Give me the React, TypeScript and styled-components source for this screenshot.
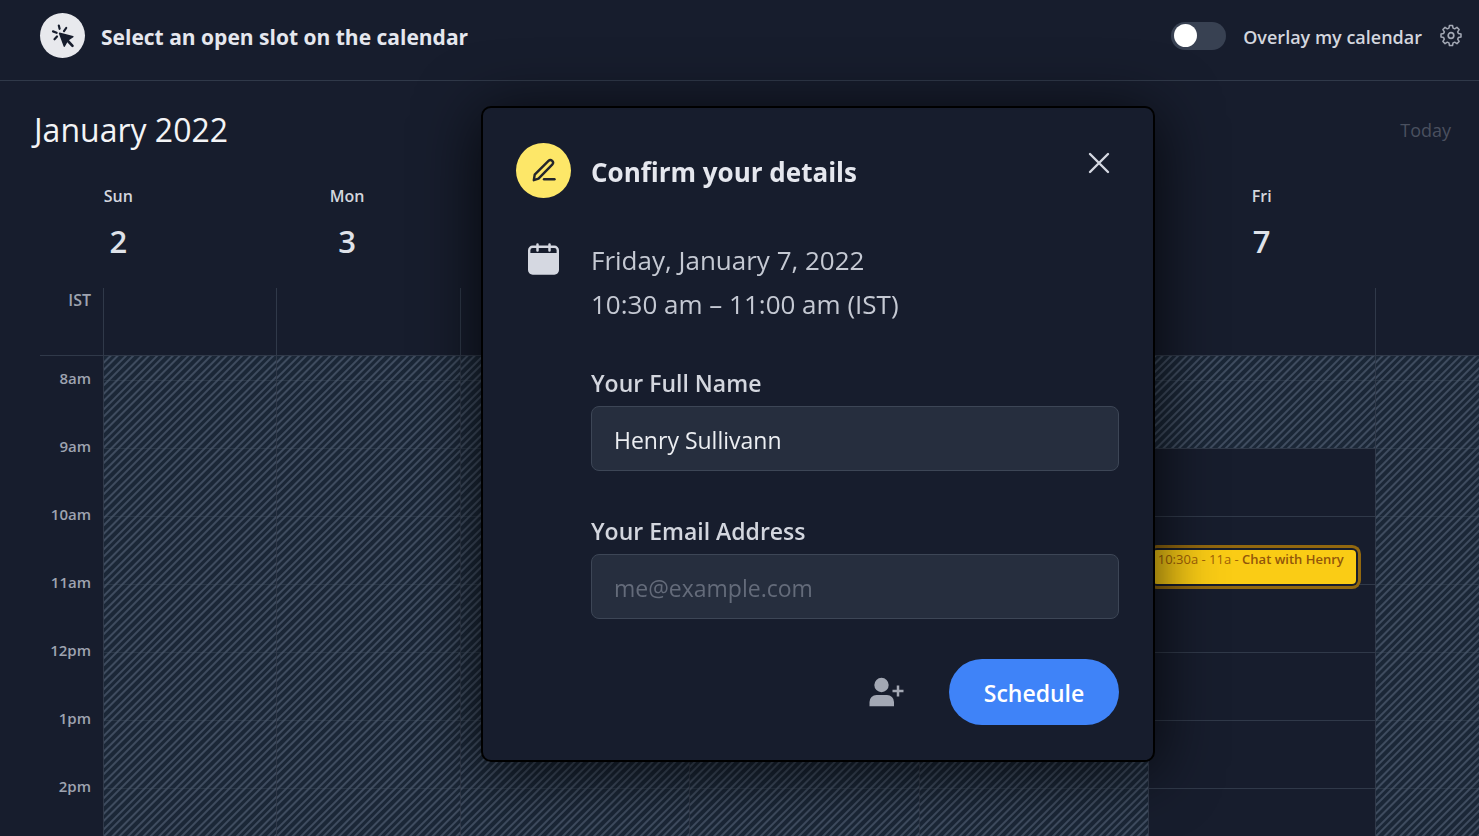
import React, { useState } from "react";
import styled, { createGlobalStyle, css } from "styled-components";

const colors = {
  page: "#171d2d",
  line: "#303949",
  hatch: "#1b2737",
  stripe: "#3f4c5f",
  heading: "#e5e7ee",
  text: "#c5c9d3",
  muted: "#9ea3b0",
  faint: "#4a505f",
  field: "#262e3e",
  fieldBorder: "#3d4656",
};

const GlobalStyle = createGlobalStyle`
  * { box-sizing: border-box; }
  body {
    margin: 0;
    background: ${colors.page};
    color: ${colors.heading};
    font-family: "Open Sans", "Noto Sans", sans-serif;
  }
  button, input { font-family: inherit; }
  h1, h2, p { margin: 0; }
`;

const Page = styled.div`
  display: flex;
  flex-direction: column;
  height: 100vh;
  overflow: hidden;
`;

const TopBar = styled.header`
  display: flex;
  align-items: center;
  flex: none;
  height: 81px;
  padding: 0 16px 9px 40px;
  border-bottom: 1px solid ${colors.line};
`;

const Badge = styled.span<{ $size: number; $color: string }>`
  display: flex;
  align-items: center;
  justify-content: center;
  flex: none;
  width: ${(p) => p.$size}px;
  height: ${(p) => p.$size}px;
  border-radius: 50%;
  background: ${(p) => p.$color};
`;

const TopTitle = styled.h1`
  flex: 1;
  margin-left: 16px;
  padding-top: 2px;
  font-size: 21px;
  line-height: 28px;
  font-weight: 700;
`;

const ToggleLabel = styled.label`
  display: flex;
  align-items: center;
  gap: 17px;
  color: #d3d6de;
  font-size: 18px;
  line-height: 28px;
  font-weight: 600;
  span { padding-top: 2px; }
`;

const Toggle = styled.input`
  appearance: none;
  display: flex;
  align-items: center;
  width: 55px;
  height: 28px;
  margin: 0;
  padding: 0 3px;
  border-radius: 14px;
  background: #384152;
  &::before {
    content: "";
    width: 23px;
    height: 23px;
    border-radius: 50%;
    background: #fff;
  }
  &:checked {
    justify-content: flex-end;
    background: #3f83f8;
  }
`;

const IconButton = styled.button`
  display: flex;
  align-items: center;
  justify-content: center;
  padding: 0;
  border: 0;
  background: none;
  cursor: pointer;
`;

const GearButton = styled(IconButton)`
  width: 24px;
  height: 24px;
  margin-left: 17px;
`;

const MonthBar = styled.div`
  display: flex;
  align-items: center;
  justify-content: space-between;
  flex: none;
  height: 97px;
  padding: 0 28px 0 34px;
`;

const Month = styled.h2`
  font-size: 32px;
  line-height: 40px;
  font-weight: 400;
  color: #f3f4f6;
`;

const Today = styled.button`
  padding: 0;
  border: 0;
  background: none;
  color: ${colors.faint};
  font-size: 18px;
  line-height: 28px;
`;

const DayHeads = styled.div`
  display: grid;
  grid-template-columns: repeat(6, 1fr);
  flex: none;
  height: 110px;
  padding: 6px 103px 0 4px;
`;

const DayHead = styled.div<{ $column: number }>`
  grid-column: ${(p) => p.$column};
  display: flex;
  flex-direction: column;
  align-items: center;
`;

const DayName = styled.span`
  font-size: 16px;
  line-height: 24px;
  font-weight: 600;
  color: #d3d6de;
`;

const DayNumber = styled.span`
  margin-top: 13px;
  font-size: 31px;
  line-height: 40px;
  font-weight: 600;
  color: #dfe2e9;
`;

const Calendar = styled.div`
  display: grid;
  grid-template-columns: 103px 173fr 184fr 229fr 229fr 229fr 227fr 104fr;
  grid-template-rows: 68px auto;
  flex: none;
`;

const Zone = styled.div`
  margin-left: 40px;
  padding-right: 12px;
  border-bottom: 1px solid ${colors.line};
  text-align: right;
  font-size: 16px;
  line-height: 24px;
  font-weight: 600;
  color: ${colors.muted};
`;

const AllDay = styled.div`
  border-left: 1px solid ${colors.line};
  border-bottom: 1px solid ${colors.line};
`;

const Axis = styled.div`
  padding: 13px 12px 0 0;
`;

const Hour = styled.div`
  height: 68px;
  text-align: right;
  font-size: 15px;
  line-height: 18px;
  font-weight: 600;
  color: ${colors.muted};
`;

const DayColumn = styled.div`
  border-left: 1px solid ${colors.line};
  background: repeating-linear-gradient(
    135deg,
    ${colors.hatch} 0 3px,
    ${colors.stripe} 4px 5px,
    ${colors.hatch} 6px 8px,
    ${colors.stripe} 9px 10px,
    ${colors.hatch} 11px
  );
`;

const Slot = styled.div<{ $open: boolean; $first: boolean }>`
  position: relative;
  height: ${(p) => (p.$first ? 24 : 68)}px;
  ${(p) =>
    !p.$first &&
    css`
      border-top: 1px solid ${p.$open ? colors.line : "rgba(75, 88, 107, 0.3)"};
    `}
  ${(p) =>
    p.$open &&
    css`
      background: ${colors.page};
    `}
`;

const Booking = styled.div`
  position: absolute;
  z-index: 1;
  top: 33px;
  left: 4px;
  right: 19px;
  height: 34px;
  padding-left: 5px;
  border-radius: 4px;
  background: #facc15;
  box-shadow: 0 0 0 2px ${colors.page}, 0 0 0 5px #92680f;
  color: #a16207;
  font-size: 13px;
  line-height: 18px;
  white-space: nowrap;
  b {
    font-weight: 600;
    color: #92560a;
  }
`;

const Overlay = styled.div`
  position: fixed;
  inset: 0;
  z-index: 2;
  display: flex;
  align-items: flex-start;
  justify-content: center;
  padding: 106px 0 0 157px;
`;

const Dialog = styled.form`
  width: 674px;
  padding: 34px 34px 35px 33px;
  border: 2px solid #000;
  border-radius: 10px;
  background: ${colors.page};
  box-shadow: 0 8px 64px rgba(0, 0, 0, 0.75);
`;

const DialogHead = styled.div`
  display: flex;
  align-items: center;
  gap: 20px;
  height: 56px;
`;

const DialogTitle = styled.h2`
  flex: 1;
  padding-top: 3px;
  font-size: 26px;
  line-height: 36px;
  font-weight: 700;
`;

const CloseButton = styled(IconButton)`
  align-self: flex-start;
  width: 40px;
  height: 42px;
`;

const When = styled.div`
  display: flex;
  gap: 32px;
  margin-top: 40px;
  padding-left: 12px;
  color: ${colors.text};
  font-size: 26px;
  line-height: 44px;
  svg { flex: none; margin-top: 5px; }
`;

const Fields = styled.div`
  display: flex;
  flex-direction: column;
  gap: 43px;
  margin: 40px 0 0 75px;
`;

const Field = styled.div`
  display: flex;
  flex-direction: column;
`;

const FieldLabel = styled.label`
  font-size: 23px;
  line-height: 34px;
  font-weight: 600;
  color: #d3d6de;
`;

const TextInput = styled.input`
  height: 65px;
  margin-top: 6px;
  padding: 2px 22px 0;
  border: 1px solid ${colors.fieldBorder};
  border-radius: 8px;
  outline: none;
  background: ${colors.field};
  color: #eceef2;
  font-size: 23px;
  &::placeholder { color: #646b7a; opacity: 1; }
`;

const Actions = styled.div`
  display: flex;
  align-items: center;
  justify-content: flex-end;
  gap: 44px;
  margin-top: 40px;
`;

const Submit = styled.button`
  width: 170px;
  height: 66px;
  padding: 2px 0 0;
  border: 0;
  border-radius: 33px;
  background: #3f83f8;
  color: #fff;
  font-size: 23px;
  font-weight: 600;
`;

const ClickIcon = () => (
  <svg width="24" height="24" viewBox="0 0 24 24" fill="none" stroke={colors.page} strokeWidth="2.2" strokeLinecap="round" aria-hidden="true">
    <path d="M7.800 1.500l.8 3.300M15.200 4l-2.200 3.200M2 7.400l3.600 1.400M3.500 15.300l2.500-2.800" />
    <path d="M8.500 9.300l13.400 3.400-5.200 3.500-3.400 6z" fill={colors.page} strokeWidth="1.400" strokeLinejoin="round" />
    <path d="M16.500 16.500l5 5.300" strokeWidth="2.600" />
  </svg>
);

const GearIcon = () => (
  <svg width="24" height="24" viewBox="0 0 24 24" fill="none" stroke="#a3a8b4" strokeWidth="1.700" strokeLinejoin="round" aria-hidden="true">
    <path d="M10.300 1.800h3.400l.6 2.900 1.800.8 2.500-1.600 2.400 2.400-1.600 2.500.8 1.800 2.900.6v3.400l-2.900.6-.8 1.800 1.600 2.500-2.400 2.400-2.500-1.600-1.800.8-.6 2.900h-3.400l-.6-2.900-1.800-.8-2.500 1.600L3 19.500l1.600-2.500-.8-1.800-2.900-.6v-3.400l2.900-.6.8-1.800L3 6.300l2.400-2.400 2.500 1.600 1.800-.8z" transform="translate(1.200 -.1) scale(.9)" />
    <circle cx="12" cy="11.500" r="2.800" />
  </svg>
);

const PencilIcon = () => (
  <svg width="24" height="24" viewBox="0 0 24 24" fill="none" stroke="#23262c" strokeWidth="2.400" strokeLinecap="round" strokeLinejoin="round" aria-hidden="true">
    <path d="M1.800 22.200l.9-5.500L16.500 2.900a2.600 2.600 0 0 1 3.700 3.700L6.500 20.700z" />
    <path d="M12 21.300h10.500" />
  </svg>
);

const CalendarIcon = () => (
  <svg width="31" height="32" viewBox="0 0 31 32" aria-hidden="true">
    <rect x="1.200" y="3.700" width="28.600" height="26.800" rx="3.500" fill="none" stroke="#d5d8e1" strokeWidth="2.400" />
    <path d="M1 10h29V28a3 3 0 0 1-3 3H4a3 3 0 0 1-3-3z" fill="#d5d8e1" />
    <path d="M9.500 1.500v6M21.500 1.500v6" stroke="#d5d8e1" strokeWidth="2.500" strokeLinecap="round" />
  </svg>
);

const CloseIcon = () => (
  <svg width="22" height="22" viewBox="0 0 22 22" fill="none" stroke="#d5d8e1" strokeWidth="2.400" strokeLinecap="round" aria-hidden="true">
    <path d="M2 2l18 18M20 2L2 20" />
  </svg>
);

const AddGuestIcon = () => (
  <svg width="36" height="30" viewBox="0 0 36 30" fill="#a3a8b4" aria-hidden="true">
    <circle cx="12.500" cy="8" r="7.200" />
    <path d="M.5 29.300v-4.300a7 7 0 0 1 7-7h10.500a7 7 0 0 1 7 7v4.300z" />
    <path d="M29 8.500v11M23.500 14h11" stroke="#a3a8b4" strokeWidth="2.500" />
  </svg>
);

const days = [
  { name: "Sun", date: 2, column: 1 },
  { name: "Mon", date: 3, column: 2 },
  { name: "Fri", date: 7, column: 6 },
];

const hours = ["8am", "9am", "10am", "11am", "12pm", "1pm", "2pm"];
const columns = [0, 1, 2, 3, 4, 5, 6];
const slots = [7, 8, 9, 10, 11, 12, 13, 14];
const FRIDAY = 5;

export default function App() {
  const [overlay, setOverlay] = useState(false);
  const [name, setName] = useState("Henry Sullivann");
  const [email, setEmail] = useState("");

  return (
    <>
      <GlobalStyle />
      <Page>
        <TopBar>
          <Badge $size={45} $color="#e8e9ed">
            <ClickIcon />
          </Badge>
          <TopTitle>Select an open slot on the calendar</TopTitle>
          <ToggleLabel>
            <Toggle type="checkbox" checked={overlay} onChange={(e) => setOverlay(e.target.checked)} />
            <span>Overlay my calendar</span>
          </ToggleLabel>
          <GearButton type="button" aria-label="Settings">
            <GearIcon />
          </GearButton>
        </TopBar>

        <MonthBar>
          <Month>January 2022</Month>
          <Today type="button">Today</Today>
        </MonthBar>

        <DayHeads>
          {days.map((day) => (
            <DayHead key={day.name} $column={day.column}>
              <DayName>{day.name}</DayName>
              <DayNumber>{day.date}</DayNumber>
            </DayHead>
          ))}
        </DayHeads>

        <Calendar>
          <Zone>IST</Zone>
          {columns.map((c) => (
            <AllDay key={c} />
          ))}
          <Axis>
            {hours.map((hour) => (
              <Hour key={hour}>{hour}</Hour>
            ))}
          </Axis>
          {columns.map((c) => (
            <DayColumn key={c}>
              {slots.map((hour) => (
                <Slot key={hour} $first={hour === 7} $open={c === FRIDAY && hour >= 9}>
                  {c === FRIDAY && hour === 10 && (
                    <Booking>
                      10:30a - 11a - <b>Chat with Henry</b>
                    </Booking>
                  )}
                </Slot>
              ))}
            </DayColumn>
          ))}
        </Calendar>
      </Page>

      <Overlay>
        <Dialog role="dialog" aria-labelledby="dialog-title" onSubmit={(e) => e.preventDefault()}>
          <DialogHead>
            <Badge $size={55} $color="#fde768">
              <PencilIcon />
            </Badge>
            <DialogTitle id="dialog-title">Confirm your details</DialogTitle>
            <CloseButton type="button" aria-label="Close">
              <CloseIcon />
            </CloseButton>
          </DialogHead>
          <When>
            <CalendarIcon />
            <div>
              <p>Friday, January 7, 2022</p>
              <p>10:30 am – 11:00 am (IST)</p>
            </div>
          </When>
          <Fields>
            <Field>
              <FieldLabel htmlFor="full-name">Your Full Name</FieldLabel>
              <TextInput id="full-name" value={name} onChange={(e) => setName(e.target.value)} />
            </Field>
            <Field>
              <FieldLabel htmlFor="email">Your Email Address</FieldLabel>
              <TextInput id="email" type="email" placeholder="me@example.com" value={email} onChange={(e) => setEmail(e.target.value)} />
            </Field>
          </Fields>
          <Actions>
            <IconButton type="button" aria-label="Add guest">
              <AddGuestIcon />
            </IconButton>
            <Submit type="submit">Schedule</Submit>
          </Actions>
        </Dialog>
      </Overlay>
    </>
  );
}
